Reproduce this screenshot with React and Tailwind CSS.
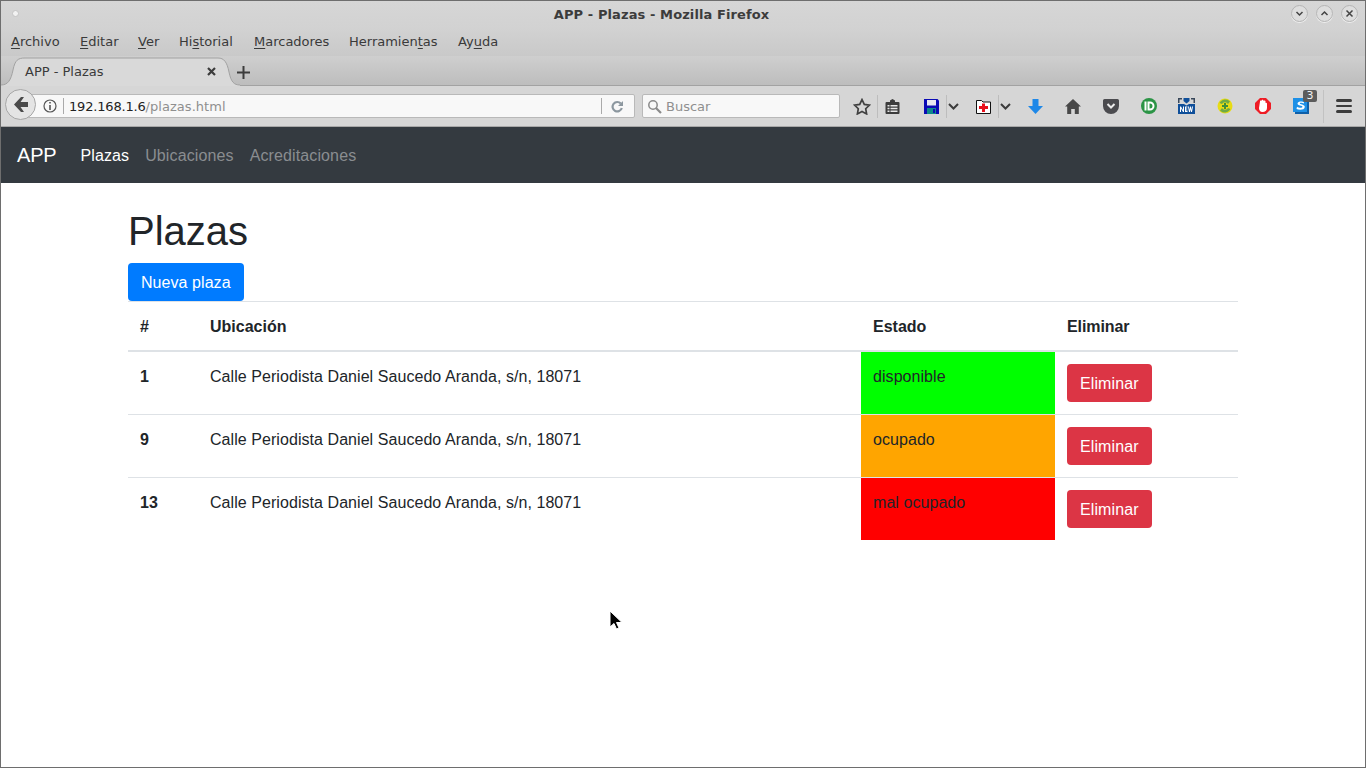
import React from 'react';

const uiFont = "font-['DejaVu_Sans',sans-serif]";

const menus = [
    { before: '', key: 'A', after: 'rchivo', w: 'w-[69px]' },
    { before: '', key: 'E', after: 'ditar', w: 'w-[58px]' },
    { before: '', key: 'V', after: 'er', w: 'w-[41px]' },
    { before: 'Hi', key: 's', after: 'torial', w: 'w-[75px]' },
    { before: '', key: 'M', after: 'arcadores', w: 'w-[95px]' },
    { before: 'Herramien', key: 't', after: 'as', w: 'w-[109px]' },
    { before: 'Ay', key: 'u', after: 'da', w: 'w-[60px]' },
];

const rows = [
    { id: 1, estado: 'disponible', color: 'bg-[#00ff00]' },
    { id: 9, estado: 'ocupado', color: 'bg-[#ffa500]' },
    { id: 13, estado: 'mal ocupado', color: 'bg-[#ff0000]' },
];

const WinButton = ({ children }) => (
    <div className="w-[17px] h-[17px] rounded-full bg-[#dedede] border border-[#b4b4b4] flex items-center justify-center shadow-[0_1px_0_#eeeeee]">
        <svg width="9" height="9" viewBox="0 0 9 9" fill="none" stroke="#444444" strokeWidth="1.5">{children}</svg>
    </div>
);

const Chevron = () => (
    <svg width="11" height="7" viewBox="0 0 11 7" fill="none" stroke="#3c3c3c" strokeWidth="2"><path d="M1 1l4.5 4.5L10 1" /></svg>
);

const Sep = () => <div className="w-px h-[23px] bg-[#bdbdbd]" />;

const Toolbar = () => (
    <div className="h-[41px] bg-[#d6d6d6] border-b border-[#a8a8a8] flex items-center relative">
        {/* back button */}
        <div className="absolute left-[4px] top-[3px] w-[31px] h-[31px] rounded-full bg-[#e4e4e4] border border-[#a6a6a6] flex items-center justify-center">
            <svg width="16" height="15" viewBox="0 0 16 15" fill="#4a4a4a"><path d="M8 0L1 7.500 8 15h3L7.500 10H15V5H7.500L11 0z" /></svg>
        </div>
        <div className="ml-[27px] w-[607px] h-[24px] bg-[#f8f8f8] border border-[#b9b9b9] rounded-r-[2px] flex items-center">
            <svg className="ml-[14px]" width="14" height="14" viewBox="0 0 14 14" fill="none" stroke="#555555">
                <circle cx="7" cy="7" r="6" strokeWidth="1.2" />
                <path d="M7 6v5M7 3v1.6" strokeWidth="1.6" />
            </svg>
            <div className="ml-[6px] w-px h-[16px] bg-[#aaaaaa]" />
            <div className={`ml-[5px] text-[13px] leading-none tracking-[-0.18px] text-[#222222] ${uiFont}`}>
                192.168.1.6<span className="text-[#8f8f8f] tracking-[0.04px]">/plazas.html</span>
            </div>
            <div className="ml-auto w-px h-[16px] bg-[#aaaaaa]" />
            <svg className="ml-[9px] mr-[10px]" width="13" height="13" viewBox="0 0 13 13" fill="none" stroke="#8c979f" strokeWidth="2.2">
                <path d="M10.8 8a4.7 4.7 0 1 1-1-4.4" />
                <path d="M12 1v5H7z" fill="#8c979f" stroke="none" />
            </svg>
        </div>
        <div className="ml-[7px] w-[198px] h-[24px] bg-[#f8f8f8] border border-[#b9b9b9] rounded-[2px] flex items-center">
            <svg className="ml-[4px]" width="15" height="15" viewBox="0 0 15 15" fill="none" stroke="#8a8a8a">
                <circle cx="6" cy="6" r="4.2" strokeWidth="1.5" />
                <path d="M9 9l5 5" strokeWidth="2.2" />
            </svg>
            <span className={`ml-[4px] text-[13px] leading-none text-[#8f8f8f] ${uiFont}`}>Buscar</span>
        </div>

        <svg className="ml-[13px]" width="18" height="17" viewBox="0 0 18 17" fill="none" stroke="#404040" strokeWidth="1.7">
            <path d="M9 1.6l2.3 4.8 5.2.7-3.8 3.6.9 5.2L9 13.4l-4.6 2.5.9-5.2L1.5 7.1l5.2-.7z" />
        </svg>
        <div className="ml-[6px]"><Sep /></div>
        <svg className="ml-[7px]" width="15" height="15" viewBox="0 0 15 15">
            <path d="M1.500 3H5V1.500L7.500 0 10 1.500V3h3.500a1 1 0 0 1 1 1v10a1 1 0 0 1-1 1h-12a1 1 0 0 1-1-1V4a1 1 0 0 1 1-1z" fill="#3c3c3c" />
            <path d="M2.500 6h2v1.500h-2zM5.500 6h7v1.500h-7zM2.500 8.800h2v1.500h-2zM5.500 8.800h7v1.500h-7zM2.500 11.500h2V13h-2zM5.500 11.500h7V13h-7z" fill="#e6e6e6" />
        </svg>

        <svg className="ml-[24px]" width="15" height="15" viewBox="0 0 15 15">
            <path d="M0 0h13.500L15 1.500V15H0z" fill="#0a0ab4" />
            <path d="M3 1h9v5.500H3z" fill="#e8e8f0" />
            <path d="M3 9h9v6H3z" fill="#0e8a8a" />
            <path d="M9 10h2v4H9z" fill="#0a0ab4" />
        </svg>
        <div className="ml-[7px]"><Sep /></div>
        <div className="ml-[1px]"><Chevron /></div>

        <svg className="ml-[17px]" width="15" height="15" viewBox="0 0 15 15">
            <path d="M0.500 1.500h5l1.500 1.500h7.500v11.500H.5z" fill="#ffffff" stroke="#111111" />
            <path d="M6 4.500h3V7h3v3H9v3H6v-3H3V7h3z" fill="#e8101c" />
        </svg>
        <div className="ml-[7px]"><Sep /></div>
        <div className="ml-[1px]"><Chevron /></div>

        <svg className="ml-[17px]" width="15" height="15" viewBox="0 0 15 15"><path d="M4.500 0h6v7H15l-7.500 8L0 7h4.500z" fill="#1e88e8" /></svg>

        <svg className="ml-[22px]" width="16" height="15" viewBox="0 0 16 15" fill="#484848">
            <path d="M8 0L0 7.500h2.200V15h4v-5h3.600v5h4V7.500H16z" />
        </svg>

        <svg className="ml-[22px]" width="16" height="15" viewBox="0 0 16 15">
            <path d="M1.500 0h13A1.500 1.500 0 0 1 16 1.500V7a8 8 0 0 1-16 0V1.500A1.500 1.500 0 0 1 1.500 0z" fill="#4b4b4f" />
            <path d="M4.500 5l3.500 3.500L11.500 5" fill="none" stroke="#ececec" strokeWidth="2" />
        </svg>

        <svg className="ml-[22px]" width="16" height="16" viewBox="0 0 16 16">
            <circle cx="8" cy="8" r="8" fill="#2b9445" />
            <path d="M3.500 3.500h2v9h-2zM6.500 3.500H9a4.500 4.500 0 0 1 0 9H6.500zM8.500 5.500v5H9a2.500 2.500 0 0 0 0-5z" fill="#ffffff" fillRule="evenodd" />
        </svg>

        <svg className="ml-[21px]" width="17" height="16" viewBox="0 0 17 16">
            <path d="M0 0h4v1.500H1.500V5H0zM13 0h4v5h-1.500V1.500H13z" fill="#39475a" />
            <path d="M5.500 0h6v3l-3 2.500-3-2.500z" fill="#0f4f9a" />
            <path d="M0 6h6l2.500 1.500L11 6h6v10H0z" fill="#0f4f9a" />
            <path d="M2 14V8.500h1L5 12V8.500h1V14H5L3 10.500V14zM7 8.500h2.500v1H8v1h1.300v1H8v1h1.500v1.500H7zM10 8.500h1l.5 3.500.6-3.500h.8l.6 3.500.5-3.500h1L14 14h-1l-.5-3-.5 3h-1z" fill="#ffffff" />
        </svg>

        <svg className="ml-[22px]" width="16" height="16" viewBox="0 0 16 16">
            <circle cx="8" cy="8" r="7.500" fill="#e8dc14" />
            <path d="M2.500 5A6.500 6.500 0 0 1 13 3.500L11 6A3.500 3.500 0 0 0 5 6z" fill="#6faa46" />
            <path d="M13.500 11A6.500 6.500 0 0 1 3 12.500L5 10a3.500 3.500 0 0 0 6 0z" fill="#6faa46" />
            <path d="M7 5h2v2h2v2H9v2H7V9H5V7h2z" fill="#3f8f3a" />
        </svg>

        <svg className="ml-[22px]" width="16" height="16" viewBox="0 0 16 16">
            <path d="M5 0h6l5 5v6l-5 5H5l-5-5V5z" fill="#ee1c25" />
            <path d="M5 3.500C5 2.500 6 2 6.500 3V2.500c0-1 2-1 2 0V3c.3-.8 2-.7 2 .3V5c.4-.6 1.500-.3 1.500.5V10c0 2.500-2 4-4.500 4S4 12 4 10z" fill="#ffffff" />
        </svg>

        <div className="relative ml-[22px] w-[16px] h-[16px]">
            <svg width="16" height="16" viewBox="0 0 16 16">
                <path d="M2 2h14v14H2z" fill="#0f5fa8" />
                <path d="M0 0h14v14H0z" fill="#1e90e6" />
                <path d="M11 4.200C10 3.300 5 2.800 4.500 5.500 4.200 8 10 7 9.500 9c-.4 1.300-4 .8-5.500-.2L3.500 11c2.500 1.200 8 1.300 8.300-2 .2-2.800-5.300-2.300-5-3.700.2-.8 3-.5 4 .2z" fill="#ffffff" />
            </svg>
            <div className={`absolute left-[10px] top-[-8px] w-[14px] h-[12px] bg-[#5c5c5c] rounded-[2px] text-[#f2f2f2] text-[11px] leading-[12px] text-center ${uiFont}`}>3</div>
        </div>

        <div className="ml-[14px]"><div className="w-px h-[33px] bg-[#c2c2c2]" /></div>
        <div className="ml-[12px] w-[16px] flex flex-col gap-[3px]">
            <div className="h-[2.500px] bg-[#3c3c3c] rounded-full" />
            <div className="h-[2.500px] bg-[#3c3c3c] rounded-full" />
            <div className="h-[2.500px] bg-[#3c3c3c] rounded-full" />
        </div>
    </div>
);

const Chrome = () => (
    <div className={`shrink-0 ${uiFont}`}>
        {/* title bar */}
        <div className="h-[28px] bg-gradient-to-b from-[#d6d6d6] to-[#d2d2d2] border-t border-[#6e6e6e] flex items-center relative">
            <div className="absolute left-[11px] top-[9px] w-[7px] h-[7px] rounded-full bg-[#f2f2f2] border border-[#c4c4c4]" />
            <div className="w-full text-center pr-[43px] text-[13px] font-bold tracking-[0.1px] text-[#3c3c3c]">APP - Plazas - Mozilla Firefox</div>
            <div className="absolute left-[1290px] top-[4px] flex gap-[8px]">
                <WinButton><path d="M1.500 3l3 3 3-3" /></WinButton>
                <WinButton><path d="M1.500 6l3-3 3 3" /></WinButton>
                <WinButton><path d="M1.500 1.500l6 6M7.500 1.500l-6 6" /></WinButton>
            </div>
        </div>
        {/* menu */}
        <div className="h-[28px] bg-gradient-to-b from-[#d2d2d2] to-[#c9c9c9] flex items-center pl-[10px] text-[13px] text-[#3a3a3a]">
            {menus.map((m, i) => (
                <div key={i} className={m.w}>
                    {m.before}<span className="underline underline-offset-2">{m.key}</span>{m.after}
                </div>
            ))}
        </div>
        {/* tabs */}
        <div className="h-[30px] bg-gradient-to-b from-[#cfcfcf] to-[#bdbdbd] border-b border-[#a2a2a2] flex items-end relative">
            <div className="relative w-[240px] h-[29px] mb-[-1px] flex items-center pl-[24px] pr-[25px] text-[13px] text-[#3a3a3a]">
                <svg className="absolute left-0 top-0" width="240" height="29" viewBox="0 0 240 29">
                    <path d="M0 28C7 28 10 23 12 13C14 3 17 1 24 1L217 1C223 1 226 5 228 15C230 25 233 28 239 28L239 29L0 29Z" fill="#d9d9d9" />
                    <path d="M0 28C7 28 10 23 12 13C14 3 17 1 24 1L217 1C223 1 226 5 228 15C230 25 233 28 239 28" fill="none" stroke="#a2a2a2" />
                </svg>
                <span className="relative">APP - Plazas</span>
                <svg className="relative ml-auto" width="9" height="9" viewBox="0 0 9 9" fill="none" stroke="#3c3c3c" strokeWidth="2.200"><path d="M1 1l7 7M8 1L1 8" /></svg>
            </div>
            <svg className="-ml-[4px] mb-[6px]" width="13" height="13" viewBox="0 0 13 13" fill="none" stroke="#3c3c3c" strokeWidth="2"><path d="M6.500 0v13M0 6.500h13" /></svg>
        </div>
        <Toolbar />
    </div>
);

const App = () => {
    return (
        <div className="h-screen w-full overflow-hidden bg-white border-x border-b border-[#6e6e6e] flex flex-col relative font-['Liberation_Sans',Arial,sans-serif] text-[#212529]">
            <Chrome />
            <nav className="h-[56px] shrink-0 bg-[#343a40] flex items-center pl-[16px]">
                <span className="text-[20px] text-white tracking-[-0.2px] mr-[24px]">APP</span>
                <div className="flex gap-[16px] text-[16px] tracking-[0.12px] mt-[2px]">
                    <span className="text-white">Plazas</span>
                    <span className="text-[#8a8d90]">Ubicaciones</span>
                    <span className="text-[#8a8d90]">Acreditaciones</span>
                </div>
            </nav>
            <main className="w-[1110px] ml-[127px]">
                <h1 className="text-[40px] leading-[48px] font-normal mt-[24px] mb-[8px]">Plazas</h1>
                <button className="block h-[38px] px-[13px] pt-[2px] bg-[#007bff] text-white text-[16px] tracking-[0.06px] rounded-[4px]">Nueva plaza</button>
                <table className="w-full table-fixed border-separate border-spacing-0 text-[16px] leading-[24px]">
                    <colgroup>
                        <col className="w-[70px]" />
                        <col className="w-[663px]" />
                        <col className="w-[194px]" />
                        <col />
                    </colgroup>
                    <thead>
                        <tr>
                            <th className="text-left font-bold px-[12px] pt-[13px] pb-[11px] border-t border-b-2 border-[#dee2e6]">#</th>
                            <th className="text-left font-bold px-[12px] pt-[13px] pb-[11px] border-t border-b-2 border-[#dee2e6]">Ubicación</th>
                            <th className="text-left font-bold px-[12px] pt-[13px] pb-[11px] border-t border-b-2 border-[#dee2e6]">Estado</th>
                            <th className="text-left font-bold px-[12px] pt-[13px] pb-[11px] border-t border-b-2 border-[#dee2e6] tracking-[-0.1px]">Eliminar</th>
                        </tr>
                    </thead>
                    <tbody>
                        {rows.map((r, i) => {
                            const line = i > 0 ? 'border-t border-[#dee2e6]' : '';
                            return (
                                <tr key={r.id}>
                                    <th className={`text-left font-bold align-top px-[12px] pt-[13px] ${line}`}>{r.id}</th>
                                    <td className={`align-top px-[12px] pt-[13px] tracking-[0.06px] ${line}`}>Calle Periodista Daniel Saucedo Aranda, s/n, 18071</td>
                                    <td className={`align-top px-[12px] pt-[13px] tracking-[0.06px] ${r.color} ${line}`}>{r.estado}</td>
                                    <td className={`align-top p-[12px] ${line}`}>
                                        <button className="block h-[38px] px-[13px] pt-[1px] bg-[#dc3545] text-white text-[16px] tracking-[0.1px] rounded-[4px]">Eliminar</button>
                                    </td>
                                </tr>
                            );
                        })}
                    </tbody>
                </table>
            </main>
            {/* mouse pointer */}
            <svg className="absolute left-[607px] top-[609px]" width="15" height="22" viewBox="0 0 15 22">
                <path d="M2 2v16l4-3.500 2.500 5.500 2.500-1-2.500-5.500H14z" fill="#000000" stroke="#ffffff" strokeWidth="1" />
            </svg>
        </div>
    );
};

export default App;
